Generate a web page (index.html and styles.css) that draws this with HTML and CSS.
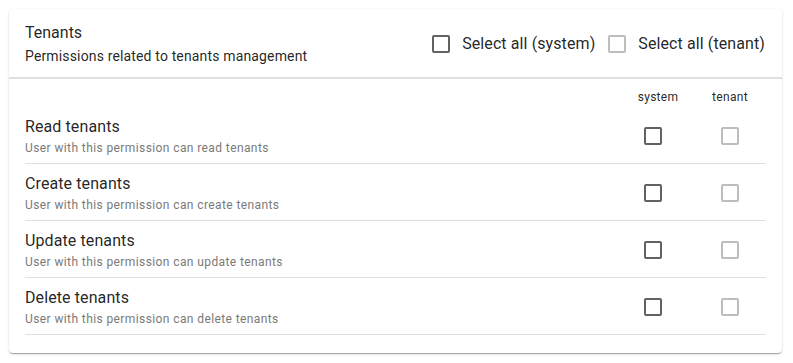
FILE: index.html
```html
<!DOCTYPE html>
<html lang="en">
<head>
    <meta charset="UTF-8">
    <meta name="viewport" content="width=device-width, initial-scale=1.0">
    <title>Tenants permissions</title>
    <link rel="stylesheet" href="styles.css">
</head>
<body>
    <div class="card">
        <div class="card-header">
            <div class="header-text">
                <div class="card-title">Tenants</div>
                <div class="card-subtitle">Permissions related to tenants management</div>
            </div>
            <div class="select-all">
                <label class="check-label"><span class="box"></span>Select all (system)</label>
                <label class="check-label"><span class="box disabled"></span>Select all (tenant)</label>
            </div>
        </div>

        <div class="perm-list">
            <div class="col-heads">
                <span class="col-head system">system</span>
                <span class="col-head">tenant</span>
            </div>

            <div class="perm-row">
                <div class="perm-text">
                    <div class="perm-name">Read tenants</div>
                    <div class="perm-desc">User with this permission can read tenants</div>
                </div>
                <div class="cell"><span class="box"></span></div>
                <div class="cell"><span class="box disabled"></span></div>
            </div>

            <div class="perm-row">
                <div class="perm-text">
                    <div class="perm-name">Create tenants</div>
                    <div class="perm-desc">User with this permission can create tenants</div>
                </div>
                <div class="cell"><span class="box"></span></div>
                <div class="cell"><span class="box disabled"></span></div>
            </div>

            <div class="perm-row">
                <div class="perm-text">
                    <div class="perm-name">Update tenants</div>
                    <div class="perm-desc">User with this permission can update tenants</div>
                </div>
                <div class="cell"><span class="box"></span></div>
                <div class="cell"><span class="box disabled"></span></div>
            </div>

            <div class="perm-row">
                <div class="perm-text">
                    <div class="perm-name">Delete tenants</div>
                    <div class="perm-desc">User with this permission can delete tenants</div>
                </div>
                <div class="cell"><span class="box"></span></div>
                <div class="cell"><span class="box disabled"></span></div>
            </div>
        </div>
    </div>
</body>
</html>
```

FILE: styles.css
```css
body {
    font-family: Roboto, "Liberation Sans", sans-serif;
    margin: 0;
    padding: 9px;
    background: #fff;
    color: rgba(0, 0, 0, 0.87);
}

.card {
    width: 773px;
    box-sizing: border-box;
    background: #fff;
    border-radius: 4px;
    box-shadow: 0 2px 1px -1px rgba(0, 0, 0, 0.2), 0 1px 1px 0 rgba(0, 0, 0, 0.14), 0 1px 3px 0 rgba(0, 0, 0, 0.12);
    padding-bottom: 18px;
}

.card-header {
    display: flex;
    align-items: center;
    justify-content: space-between;
    padding: 12px 17px 11px 16px;
    border-bottom: 2px solid #e0e0e0;
}

.card-title {
    font-size: 16px;
    line-height: 24px;
}

.card-subtitle {
    font-size: 14px;
    line-height: 20px;
    margin-top: 1px;
    letter-spacing: 0.15px;
}

.select-all {
    display: flex;
    align-items: center;
    gap: 13px;
}

.check-label {
    display: flex;
    align-items: center;
    gap: 12px;
    font-size: 16px;
    line-height: 24px;
    letter-spacing: 0.1px;
}

.box {
    display: inline-block;
    width: 18px;
    height: 18px;
    box-sizing: border-box;
    border: 2px solid #616161;
    border-radius: 2px;
}

.box.disabled {
    border-color: #bdbdbd;
}

.perm-list {
    padding: 0 16px;
}

.col-heads {
    display: flex;
    justify-content: flex-end;
    gap: 21px;
    padding: 10px 8px 2px 0;
}

.col-head {
    width: 56px;
    text-align: center;
    font-size: 12px;
    line-height: 16px;
    letter-spacing: 0.3px;
}

.col-head.system {
    padding-left: 10px;
    box-sizing: border-box;
}

.perm-row {
    display: grid;
    grid-template-columns: 1fr 56px 56px;
    column-gap: 21px;
    align-items: center;
    padding: 8px 8px 7px 0;
    border-bottom: 1px solid #e0e0e0;
}

.perm-name {
    font-size: 16px;
    line-height: 24px;
    letter-spacing: 0.1px;
}

.perm-desc {
    font-size: 12px;
    line-height: 16px;
    margin-top: 1px;
    letter-spacing: 0.4px;
    color: #7a7a7a;
}

.cell {
    display: flex;
    justify-content: center;
}
```
